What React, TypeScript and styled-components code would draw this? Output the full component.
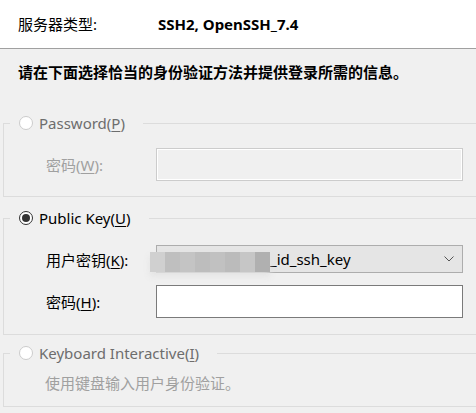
import styled, { createGlobalStyle } from "styled-components";

const GlobalStyle = createGlobalStyle`
  html, body {
    margin: 0;
    padding: 0;
    background: #f0f0f0;
  }
  body {
    font-family: "Noto Sans", "Noto Sans CJK SC", sans-serif;
    font-size: 15px;
    color: #000;
  }
`;

const Page = styled.div`
  width: 476px;
  height: 413px;
  overflow: hidden;
  background: #f0f0f0;
`;

const Header = styled.div`
  height: 49px;
  box-sizing: border-box;
  background: #ffffff;
  border-bottom: 1px solid #a0a0a0;
  display: flex;
  align-items: center;
  padding: 0 0 1px 18px;
`;

const HeaderLabel = styled.div`
  width: 140px;
`;

const HeaderValue = styled.div`
  font-weight: bold;
`;

const Intro = styled.div`
  font-weight: bold;
  line-height: 20px;
  padding: 13px 0 0 18px;
`;

const Group = styled.fieldset<{ $top: number; $bottom: number }>`
  margin: ${(p) => p.$top}px 0 0 3px;
  width: 500px;
  border: 1px solid #dcdcdc;
  padding: 0 0 ${(p) => p.$bottom}px 0;
  min-inline-size: 0;
  box-sizing: border-box;
`;

const Legend = styled.legend`
  margin-left: 6px;
  padding: 0 18px 0 9px;
  display: flex;
  align-items: center;
  gap: 6px;
  height: 20px;
  line-height: 20px;
`;

const Radio = styled.span<{ $checked?: boolean }>`
  width: 14px;
  height: 14px;
  flex: none;
  box-sizing: border-box;
  border-radius: 50%;
  border: 1px solid ${(p) => (p.$checked ? "#333333" : "#cccccc")};
  background: #ffffff;
  display: flex;
  align-items: center;
  justify-content: center;

  &::after {
    content: "";
    display: ${(p) => (p.$checked ? "block" : "none")};
    width: 8px;
    height: 8px;
    border-radius: 50%;
    background: #333333;
  }
`;

const RadioText = styled.span<{ $disabled?: boolean }>`
  color: ${(p) => (p.$disabled ? "#6d6d6d" : "#000")};
  white-space: nowrap;
`;

const Content = styled.div`
  padding-left: 42px;
`;

const Row = styled.div<{ $top: number }>`
  display: flex;
  align-items: center;
  margin-top: ${(p) => p.$top}px;
  position: relative;
`;

const FieldLabel = styled.div<{ $disabled?: boolean }>`
  width: 110px;
  color: ${(p) => (p.$disabled ? "#a0a0a0" : "#000")};
  white-space: nowrap;
`;

const Mn = styled.span`
  text-decoration: underline;
  text-underline-offset: 2px;
`;

const TextBox = styled.div<{ $disabled?: boolean }>`
  width: 307px;
  height: 33px;
  box-sizing: border-box;
  border: 1px solid ${(p) => (p.$disabled ? "#cccccc" : "#7a7a7a")};
  background: ${(p) => (p.$disabled ? "#f0f0f0" : "#ffffff")};
  box-shadow: ${(p) => (p.$disabled ? "inset 0 0 0 1px #ffffff" : "none")};
`;

const Select = styled.div`
  width: 307px;
  height: 28px;
  box-sizing: border-box;
  border: 1px solid #adadad;
  background: #e5e5e5;
  display: flex;
  align-items: center;
  padding: 0 8px 0 113px;
  justify-content: space-between;
`;

const Blur = styled.div`
  position: absolute;
  left: 104px;
  top: 7px;
  height: 20px;
  display: flex;
  filter: blur(0.5px);
  box-shadow: 0 4px 6px rgba(225, 225, 225, 0.9);
`;

const BlurCell = styled.span<{ $c: string }>`
  width: 15px;
  height: 20px;
  background: ${(p) => p.$c};
`;

const Note = styled.div`
  color: #a0a0a0;
  line-height: 20px;
  margin-top: 10px;
  margin-left: -1px;
`;

const blurCells = ["#d0d0d0", "#bfbfbf", "#c4c4c4", "#bdbdbd", "#c1c1c1", "#bbbbbb", "#c6c6c6", "#b0b0b0"];

export default function App() {
  return (
    <Page>
      <GlobalStyle />
      <Header>
        <HeaderLabel>服务器类型:</HeaderLabel>
        <HeaderValue>SSH2, OpenSSH_7.4</HeaderValue>
      </Header>
      <Intro>请在下面选择恰当的身份验证方法并提供登录所需的信息。</Intro>

      <Group $top={31} $bottom={15}>
        <Legend>
          <Radio />
          <RadioText $disabled>
            Password(<Mn>P</Mn>)
          </RadioText>
        </Legend>
        <Content>
          <Row $top={15}>
            <FieldLabel $disabled>
              密码(<Mn>W</Mn>):
            </FieldLabel>
            <TextBox $disabled />
          </Row>
        </Content>
      </Group>

      <Group $top={11} $bottom={16}>
        <Legend>
          <Radio $checked />
          <RadioText>
            Public Key(<Mn>U</Mn>)
          </RadioText>
        </Legend>
        <Content>
          <Row $top={17}>
            <FieldLabel>
              用户密钥(<Mn>K</Mn>):
            </FieldLabel>
            <Select>
              <span>_id_ssh_key</span>
              <svg width="10" height="6" viewBox="0 0 10 6">
                <path d="M0.5 0.5 L5 5 L9.5 0.5" fill="none" stroke="#555" strokeWidth="1" />
              </svg>
            </Select>
            <Blur>
              {blurCells.map((c, i) => (
                <BlurCell key={i} $c={c} />
              ))}
            </Blur>
          </Row>
          <Row $top={12}>
            <FieldLabel>
              密码(<Mn>H</Mn>):
            </FieldLabel>
            <TextBox />
          </Row>
        </Content>
      </Group>

      <Group $top={8} $bottom={13}>
        <Legend>
          <Radio />
          <RadioText $disabled>
            Keyboard Interactive(<Mn>I</Mn>)
          </RadioText>
        </Legend>
        <Content>
          <Note>使用键盘输入用户身份验证。</Note>
        </Content>
      </Group>
    </Page>
  );
}
